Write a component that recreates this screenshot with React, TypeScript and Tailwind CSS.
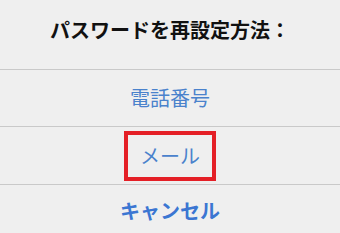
import React from 'react';

const App = () => {
    return (
        <div
            className="w-[340px] h-[233px] bg-[#efefef] overflow-hidden flex flex-col"
            style={{ fontFamily: '"Noto Sans CJK JP", "Noto Sans", sans-serif' }}
        >
            {/* Title */}
            <div className="h-[70px] shrink-0 flex items-center justify-center border-b border-[#c9c9c9] pb-[9px]">
                <h1 className="text-[20px] leading-none font-bold text-[#111111]">
                    パスワードを再設定方法：
                </h1>
            </div>

            {/* Phone */}
            <div className="h-[57px] shrink-0 flex items-center justify-center border-b border-[#c9c9c9]">
                <span className="text-[20px] leading-none text-[#4a82cc]">電話番号</span>
            </div>

            {/* Mail (highlighted) */}
            <div className="h-[58px] shrink-0 flex items-center justify-center border-b border-[#c9c9c9]">
                <div className="w-[92px] h-[50px] border-4 border-[#e41f26] flex items-center justify-center">
                    <span className="text-[20px] leading-none text-[#4a82cc]">メール</span>
                </div>
            </div>

            {/* Cancel */}
            <div className="flex-1 flex items-center justify-center pt-[4px]">
                <span className="text-[20px] leading-none font-bold text-[#3b76d2]">キャンセル</span>
            </div>
        </div>
    );
};

export default App;
